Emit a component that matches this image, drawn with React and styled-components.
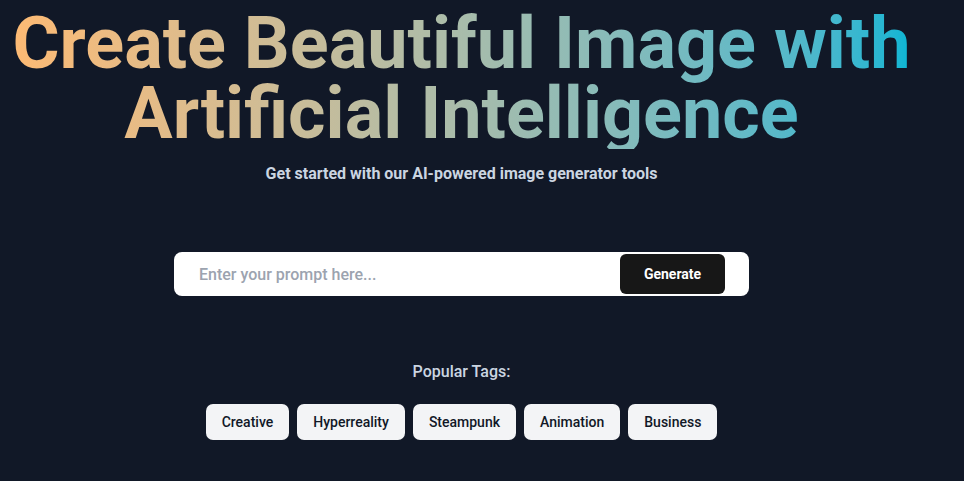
import styled, { createGlobalStyle } from 'styled-components'

const GlobalStyle = createGlobalStyle`
  html, body {
    margin: 0;
    padding: 0;
    background: #111827;
  }
  body {
    font-family: Roboto, "Liberation Sans", sans-serif;
  }
`

const Page = styled.main`
  width: 923px;
  min-height: 481px;
  padding-top: 9px;
  display: flex;
  flex-direction: column;
  align-items: center;
  box-sizing: border-box;
`

const Title = styled.h1`
  margin: 0;
  font-size: 72px;
  line-height: 70px;
  font-weight: 700;
  text-align: center;
  background: linear-gradient(to right in oklab, #fdba74, #06b6d4);
  -webkit-background-clip: text;
  background-clip: text;
  color: transparent;
`

const Subtitle = styled.p`
  margin: 16px 0 0;
  font-size: 16px;
  line-height: 18px;
  font-weight: 700;
  color: #cbd5e1;
`

const SearchBar = styled.form`
  margin-top: 69px;
  width: 575px;
  height: 44px;
  background: #fff;
  border-radius: 8px;
  display: flex;
  align-items: center;
  padding: 0 24px 0 23px;
  box-sizing: border-box;
`

const PromptInput = styled.input`
  flex: 1;
  border: none;
  outline: none;
  background: transparent;
  font-family: inherit;
  font-size: 16px;
  font-weight: 500;
  color: #111827;
  &::placeholder {
    color: #9ca3af;
  }
`

const GenerateButton = styled.button`
  width: 105px;
  height: 40px;
  border: none;
  border-radius: 6px;
  background: #171717;
  color: #fff;
  font-family: inherit;
  font-size: 14px;
  font-weight: 700;
  cursor: pointer;
`

const TagsLabel = styled.p`
  margin: 67px 0 0;
  font-size: 16px;
  line-height: 18px;
  font-weight: 500;
  color: #cbd5e1;
`

const TagRow = styled.div`
  margin-top: 23px;
  display: flex;
  gap: 8px;
`

const Tag = styled.button`
  height: 36px;
  padding: 0 16px;
  border: none;
  border-radius: 7px;
  background: #f3f4f6;
  color: #111827;
  font-family: inherit;
  font-size: 14px;
  font-weight: 500;
  cursor: pointer;
`

const tags = ['Creative', 'Hyperreality', 'Steampunk', 'Animation', 'Business']

export default function App() {
  return (
    <>
      <GlobalStyle />
      <Page>
        <Title>
          Create Beautiful Image with
          <br />
          Artificial Intelligence
        </Title>
        <Subtitle>Get started with our AI-powered image generator tools</Subtitle>
        <SearchBar onSubmit={(e) => e.preventDefault()}>
          <PromptInput placeholder="Enter your prompt here..." />
          <GenerateButton type="submit">Generate</GenerateButton>
        </SearchBar>
        <TagsLabel>Popular Tags:</TagsLabel>
        <TagRow>
          {tags.map((t) => (
            <Tag key={t}>{t}</Tag>
          ))}
        </TagRow>
      </Page>
    </>
  )
}
